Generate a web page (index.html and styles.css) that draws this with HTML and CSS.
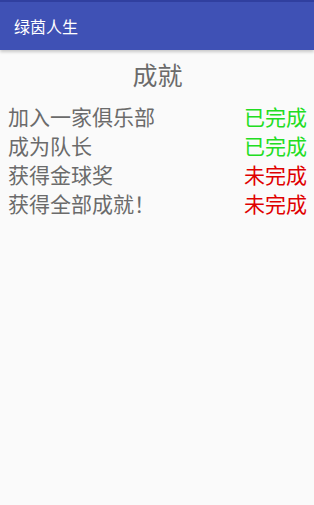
FILE: index.html
```html
<!DOCTYPE html>
<html lang="zh-CN">
<head>
    <meta charset="UTF-8">
    <meta name="viewport" content="width=device-width, initial-scale=1.0">
    <title>绿茵人生</title>
    <link rel="stylesheet" href="styles.css">
</head>
<body>
    <div class="app">
        <header class="app-bar">
            <h1>绿茵人生</h1>
        </header>

        <main class="content">
            <h2 class="page-title">成就</h2>
            <ul class="achievement-list">
                <li class="achievement">
                    <span class="name">加入一家俱乐部</span>
                    <span class="status done">已完成</span>
                </li>
                <li class="achievement">
                    <span class="name">成为队长</span>
                    <span class="status done">已完成</span>
                </li>
                <li class="achievement">
                    <span class="name">获得金球奖</span>
                    <span class="status todo">未完成</span>
                </li>
                <li class="achievement">
                    <span class="name">获得全部成就！</span>
                    <span class="status todo">未完成</span>
                </li>
            </ul>
        </main>
    </div>
</body>
</html>
```

FILE: styles.css
```css
* {
    margin: 0;
    padding: 0;
    box-sizing: border-box;
}

body {
    font-family: Roboto, "Noto Sans CJK SC", sans-serif;
    background-color: #fafafa;
    height: 100vh;
    overflow: hidden;
}

.app {
    height: 100vh;
    display: flex;
    flex-direction: column;
}

.app-bar {
    height: 50px;
    background-color: #3f51b5;
    border-top: 2px solid #303f9f;
    display: flex;
    align-items: center;
    padding: 0 14px;
    box-shadow: 0 2px 3px rgba(0, 0, 0, 0.2);
}

.app-bar h1 {
    color: #fff;
    font-size: 16px;
    font-weight: 400;
}

.content {
    flex: 1;
    padding: 10px 7px 0 8px;
}

.page-title {
    text-align: center;
    font-size: 25px;
    font-weight: 400;
    color: #6b6b6b;
    line-height: 34px;
    margin-bottom: 10px;
}

.achievement-list {
    list-style: none;
}

.achievement {
    display: flex;
    justify-content: space-between;
    font-size: 21px;
    line-height: 29px;
}

.achievement .name {
    color: #6b6b6b;
}

.status.done {
    color: #22dd22;
}

.status.todo {
    color: #e00000;
}
```
